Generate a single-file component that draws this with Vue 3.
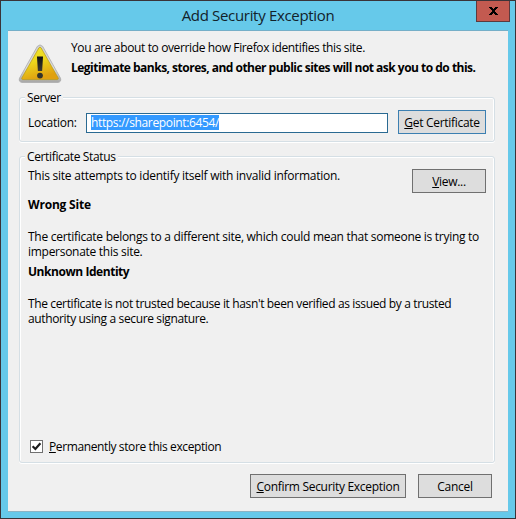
<template>
  <div class="window">
    <header class="titlebar">
      <h1>Add Security Exception</h1>
      <button class="close" aria-label="Close">
        <svg width="9" height="8" viewBox="0 0 9 8" shape-rendering="crispEdges">
          <path d="M0 0h3v1h1v1h1V1h1V0h3v1H8v1H7v1H6v2h1v1h1v1h1v1H6V7H5V6H4v1H3v1H0V7h1V6h1V5h1V3H2V2H1V1H0z" fill="#000" />
        </svg>
      </button>
    </header>

    <main class="content">
      <div class="intro">
        <svg class="warning" width="44" height="40" viewBox="0 0 44 40">
          <defs>
            <linearGradient id="rim" x1="0" y1="0" x2="0" y2="1">
              <stop offset="0" stop-color="#cfcfcf" />
              <stop offset="0.6" stop-color="#dcdcdc" />
              <stop offset="1" stop-color="#a8a8a8" />
            </linearGradient>
            <linearGradient id="fill" x1="0" y1="0" x2="0.35" y2="1">
              <stop offset="0" stop-color="#f0e634" />
              <stop offset="0.5" stop-color="#ecd81c" />
              <stop offset="1" stop-color="#e0a010" />
            </linearGradient>
            <linearGradient id="mark" x1="0" y1="0" x2="0" y2="1">
              <stop offset="0" stop-color="#111" />
              <stop offset="1" stop-color="#3a3a32" />
            </linearGradient>
          </defs>
          <path d="M19.3 2.4Q22 -0.6 24.7 2.4L42.5 34.2Q43.6 38 40 38.4H4Q0.4 38 1.5 34.2z" fill="url(#rim)" stroke="#a9a9a9" stroke-width="0.8" />
          <path d="M20.8 4Q22 2.2 23.2 4L40.2 34Q40.6 35.4 39.4 35.6H4.6Q3.4 35.4 3.8 34z" fill="url(#fill)" stroke="#b99b12" stroke-width="0.7" />
          <path d="M19 12.5h6l-0.9 14.5h-4.2z" fill="url(#mark)" />
          <circle cx="22" cy="31.6" r="2.9" fill="#33332c" />
        </svg>
        <div>
          <p class="lead">You are about to override how Firefox identifies this site.</p>
          <p class="warn">Legitimate banks, stores, and other public sites will not ask you to do this.</p>
        </div>
      </div>

      <section class="group server">
        <h2><span>Server</span></h2>
        <div class="row">
          <label class="location">Location:</label>
          <div class="field"><span class="selected">{{ location }}</span></div>
          <button class="btn focus"><u>G</u>et Certificate</button>
        </div>
      </section>

      <section class="group status">
        <h2><span>Certificate Status</span></h2>
        <div class="status-head">
          <p class="summary">This site attempts to identify itself with invalid information.</p>
          <button class="btn small"><u>V</u>iew...</button>
        </div>
        <div v-for="p in problems" :key="p.title" class="problem" :class="p.kind">
          <h3>{{ p.title }}</h3>
          <p>{{ p.text }}</p>
        </div>
        <label class="permanent">
          <span class="box" @click="permanent = !permanent">
            <svg v-if="permanent" width="11" height="11" viewBox="0 0 11 11">
              <path d="M1.6 5.2L4.4 8 9.4 2.2" fill="none" stroke="#1c1c1c" stroke-width="2.2" />
            </svg>
          </span>
          <span><u>P</u>ermanently store this exception</span>
        </label>
      </section>

      <footer class="actions">
        <button class="btn confirm"><u>C</u>onfirm Security Exception</button>
        <button class="btn small">Cancel</button>
      </footer>
    </main>
  </div>
</template>

<script setup>
import { ref } from 'vue'

const location = ref('https://sharepoint:6454/')
const permanent = ref(true)

const problems = [
  {
    kind: 'mismatch',
    title: 'Wrong Site',
    text: 'The certificate belongs to a different site, which could mean that someone is trying to\nimpersonate this site.',
  },
  {
    kind: 'untrusted',
    title: 'Unknown Identity',
    text: "The certificate is not trusted because it hasn't been verified as issued by a trusted\nauthority using a secure signature.",
  },
]
</script>

<style>
body {
  margin: 0;
}
</style>

<style scoped>
.window {
  box-sizing: border-box;
  width: 516px;
  height: 519px;
  display: flex;
  flex-direction: column;
  padding: 0 7px 6px;
  border: 1px solid #3a3338;
  background: #66c9ea;
  color: #000;
  font: 12px/15px "Open Sans", "Noto Sans", sans-serif;
  letter-spacing: -0.3px;
}
h1, h2, h3, p {
  margin: 0;
  font-size: inherit;
  font-weight: normal;
  white-space: pre;
}
u {
  text-decoration: underline 1px;
  text-underline-offset: 1px;
  text-decoration-skip-ink: none;
}
.titlebar {
  position: relative;
  height: 29px;
  flex: none;
  text-align: center;
}
h1 {
  font-size: 15px;
  line-height: 29px;
  letter-spacing: -0.32px;
  color: #12222a;
}
.close {
  position: absolute;
  top: 0;
  right: -2px;
  box-sizing: border-box;
  width: 34px;
  height: 21px;
  display: flex;
  align-items: center;
  justify-content: center;
  padding: 0;
  border: 1px solid #5c3a3e;
  border-top: 0;
  background: #c35a50;
}
.content {
  flex: 1;
  display: flex;
  flex-direction: column;
  padding: 9px 13px 13px 11px;
  border-top: 1px solid #75afc8;
  border-bottom: 1px solid #8cb4c4;
  background: #f0f0f0;
}
.intro {
  display: flex;
  height: 50px;
  gap: 9px;
}
.warning {
  flex: none;
  margin-top: 4px;
  margin-left: -1px;
}
.lead {
  letter-spacing: -0.37px;
}
.warn {
  margin-top: 5px;
  font-weight: bold;
  letter-spacing: -0.51px;
}
.group {
  display: flex;
  flex-direction: column;
  box-sizing: border-box;
  margin-top: 7px;
  border: 1px solid #d5dfe5;
  border-radius: 3px;
  box-shadow: inset 1px 1px #fff, inset -1px 0 #fff, 0 1px #fff;
  padding: 0 8px;
}
.group h2 {
  height: 15px;
  margin: -8px 0 0 -3px;
  letter-spacing: -0.36px;
}
.group h2 span {
  display: inline-block;
  padding: 0 2px;
  background: #f0f0f0;
}
.server {
  height: 45px;
}
.row {
  display: flex;
  align-items: center;
  margin-top: 5px;
}
.location {
  flex: none;
  width: 58px;
  letter-spacing: -0.25px;
}
.field {
  flex: none;
  box-sizing: border-box;
  width: 302px;
  height: 20px;
  margin: 1px 10px 0 0;
  padding: 1px 4px;
  border: 1px solid #2a6a92;
  background: #fff;
}
.selected {
  display: block;
  width: max-content;
  height: 15px;
  background: #3399ff;
  color: #fff;
  letter-spacing: -0.35px;
}
.btn {
  flex: none;
  box-sizing: border-box;
  height: 24px;
  padding: 0;
  border: 1px solid #707070;
  background: #dddddd;
  color: #000;
  font: inherit;
  letter-spacing: inherit;
  white-space: nowrap;
}
.focus {
  width: 88px;
  border-color: #3c7fb1;
}
.small {
  width: 74px;
}
.confirm {
  width: 156px;
}
.status {
  height: 307px;
  margin-top: 14px;
}
.status-head {
  display: flex;
  justify-content: space-between;
  height: 29px;
  margin-top: 4px;
}
.status-head .btn {
  margin-top: 1px;
}
.summary {
  letter-spacing: -0.25px;
}
.problem {
  height: 67px;
}
h3 {
  margin-bottom: 17px;
  font-weight: bold;
}
.mismatch h3 {
  letter-spacing: -0.2px;
}
.mismatch p {
  letter-spacing: -0.28px;
}
.mismatch p::first-line {
  letter-spacing: -0.28px;
}
.untrusted h3 {
  letter-spacing: -0.45px;
}
.untrusted p {
  letter-spacing: -0.365px;
}
.permanent {
  display: flex;
  align-items: center;
  gap: 6px;
  margin: auto 0 8px 2px;
  letter-spacing: -0.39px;
}
.box {
  box-sizing: border-box;
  width: 13px;
  height: 13px;
  border: 1px solid #707070;
  background: #fff;
}
.box svg {
  display: block;
}
.actions {
  display: flex;
  justify-content: flex-end;
  gap: 12px;
  margin-top: 11px;
  padding-right: 3px;
}
</style>
